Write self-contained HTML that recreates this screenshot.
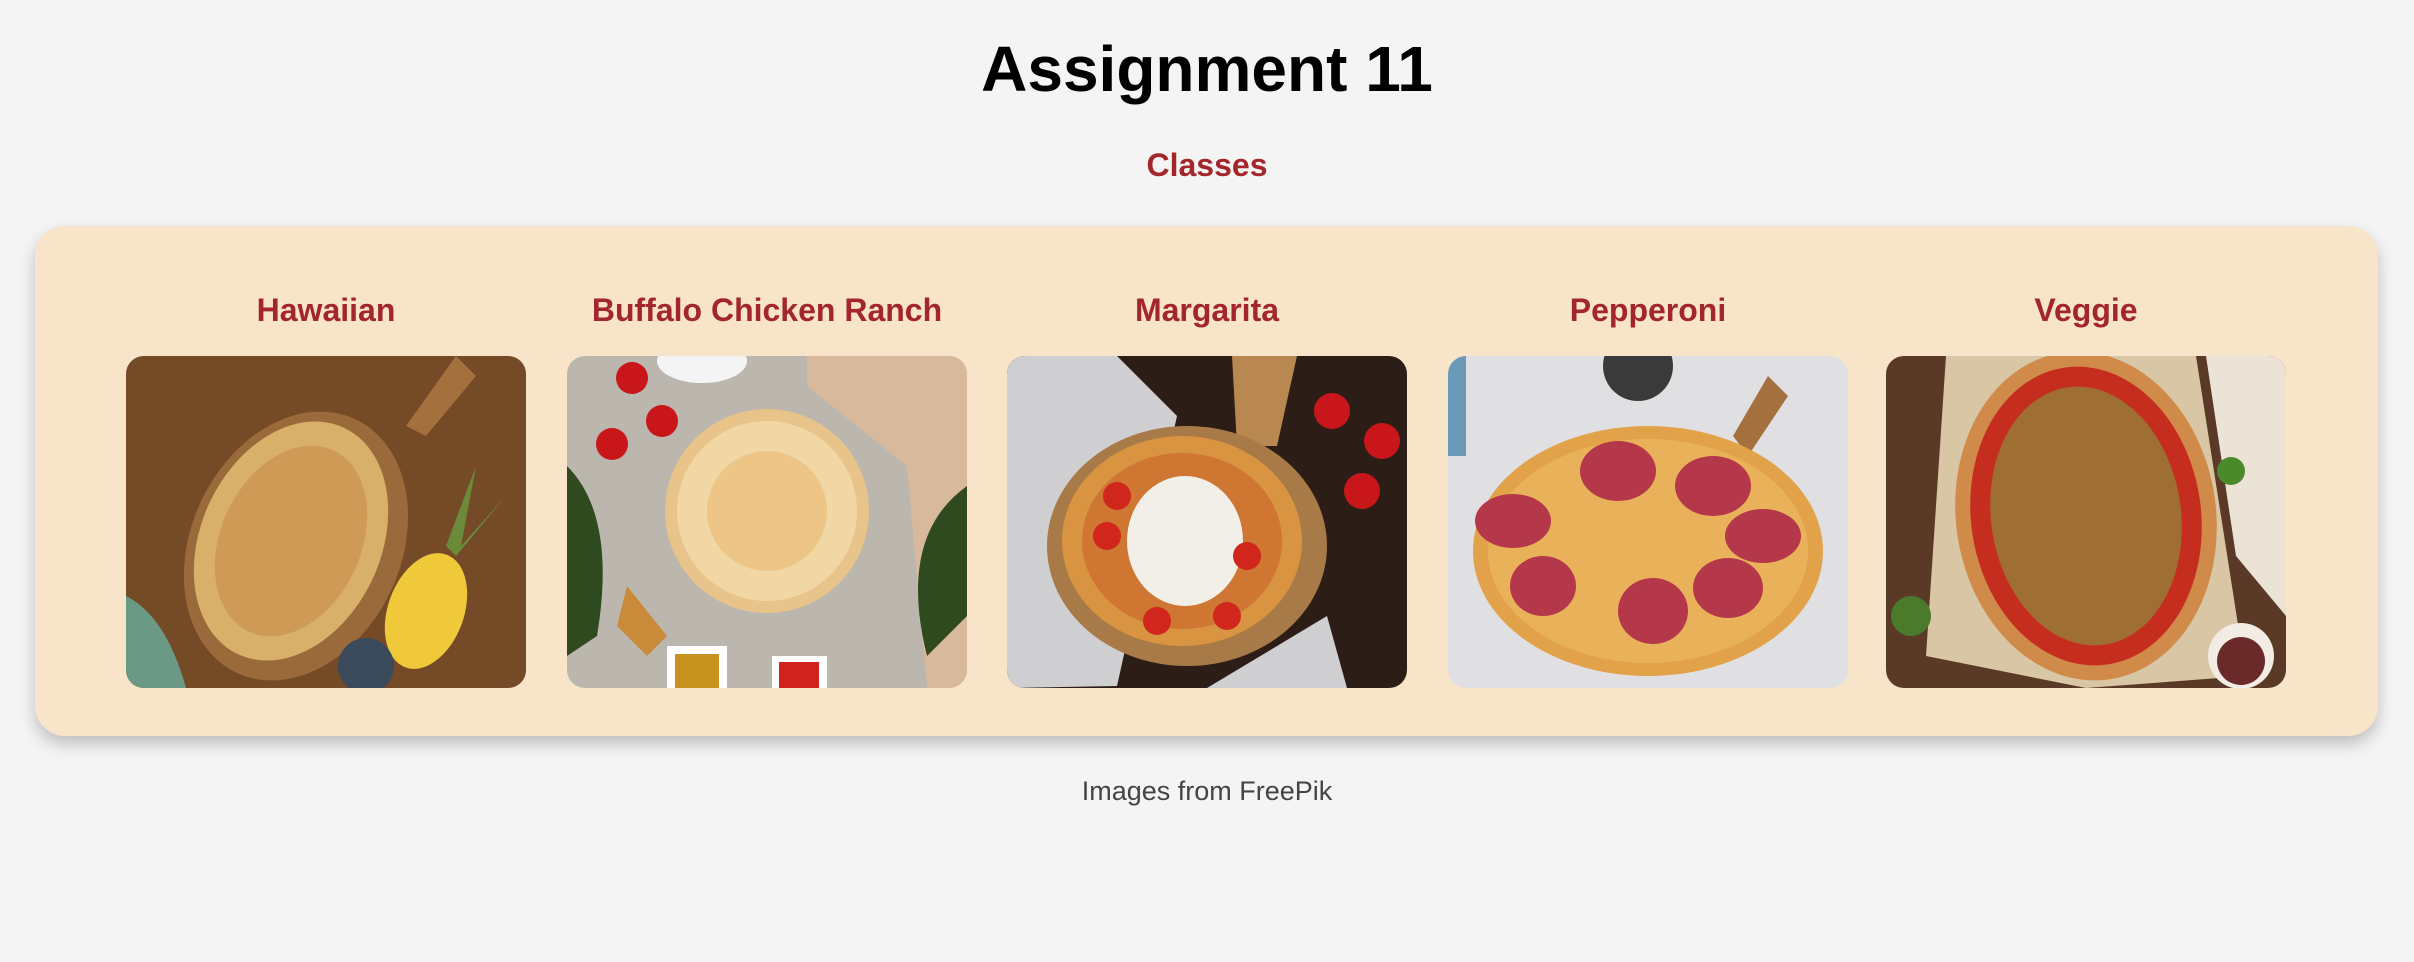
<!DOCTYPE html>
<html><head><meta charset="utf-8"><style>
html,body{margin:0;padding:0;background:#f4f4f4;width:2414px;height:962px;overflow:hidden;font-family:"Liberation Sans",Arial,sans-serif}
h1{position:absolute;top:26px;left:0;width:2414px;text-align:center;margin:0;font-size:64px;line-height:86px;color:#000;font-weight:bold}
.cls{position:absolute;top:145px;left:0;width:2414px;text-align:center;margin:0;font-size:32px;line-height:40px;color:#a3262a;font-weight:bold}
.card{position:absolute;left:35px;top:226px;width:2343px;height:510px;background:#f8e4c8;border-radius:30px;box-shadow:0 8px 16px rgba(0,0,0,.22)}
.item{position:absolute;top:0;width:400px;text-align:center}
.item h3{margin:0;position:absolute;top:64px;left:0;width:400px;font-size:32px;line-height:40px;color:#a3262a;font-weight:bold}
.item svg{position:absolute;top:130px;left:0;width:400px;height:332px;border-radius:18px}
.foot{position:absolute;top:776px;left:0;width:2414px;text-align:center;font-size:27px;color:#444}
</style></head><body>
<h1>Assignment 11</h1>
<div class="cls">Classes</div>
<div class="card">
<div class="item" style="left:91px"><h3>Hawaiian</h3>
<svg viewBox="0 0 400 332"><rect width="400" height="332" fill="#6e4524"/><rect x="0" y="0" width="400" height="332" fill="#7b4f2a" opacity=".5"/><path d="M0 240 Q40 260 60 332 L0 332Z" fill="#6a9a86"/><path d="M330 0 L350 20 L300 80 L280 70Z" fill="#a4713e"/><ellipse cx="170" cy="190" rx="105" ry="140" transform="rotate(25 170 190)" fill="#9a6a3a"/><ellipse cx="165" cy="185" rx="90" ry="125" transform="rotate(25 165 185)" fill="#d8b06a"/><ellipse cx="165" cy="185" rx="70" ry="100" transform="rotate(25 165 185)" fill="#c98a4a" opacity=".6"/><ellipse cx="300" cy="255" rx="38" ry="60" transform="rotate(20 300 255)" fill="#f0c93a"/><path d="M320 190 L350 110 L335 190 L380 140 L330 200Z" fill="#6b8a3a"/><circle cx="240" cy="310" r="28" fill="#3b4a5a"/></svg></div>
<div class="item" style="left:532px"><h3>Buffalo Chicken Ranch</h3>
<svg viewBox="0 0 400 332"><rect width="400" height="332" fill="#bcb7ae"/><path d="M240 0 L400 0 L400 332 L360 332 L340 110 L240 30Z" fill="#d9b99b"/><ellipse cx="135" cy="5" rx="45" ry="22" fill="#f4f4f4"/><path d="M0 110 Q50 160 30 280 L0 300Z" fill="#2f4a1e"/><path d="M400 130 Q330 180 360 300 L400 260Z" fill="#2f4a1e"/><circle cx="65" cy="22" r="16" fill="#c8161a"/><circle cx="95" cy="65" r="16" fill="#c8161a"/><circle cx="45" cy="88" r="16" fill="#c8161a"/><path d="M60 230 L100 280 L80 300 L50 270Z" fill="#c98a3a"/><circle cx="200" cy="155" r="102" fill="#e8c38a"/><circle cx="200" cy="155" r="90" fill="#f1d7a4"/><circle cx="200" cy="155" r="60" fill="#e9b46a" opacity=".5"/><rect x="100" y="290" width="60" height="42" fill="#fff"/><rect x="108" y="298" width="44" height="34" fill="#c8921e"/><rect x="205" y="300" width="55" height="32" fill="#fff"/><rect x="212" y="306" width="40" height="26" fill="#d0221e"/></svg></div>
<div class="item" style="left:972px"><h3>Margarita</h3>
<svg viewBox="0 0 400 332"><rect width="400" height="332" fill="#2c1d16"/><path d="M0 0 L110 0 L170 60 L110 330 L0 332Z" fill="#cfcfd2"/><path d="M200 332 L340 332 L320 260Z" fill="#cfcfd2"/><path d="M225 0 L290 0 L270 90 L230 90Z" fill="#b98750"/><circle cx="325" cy="55" r="18" fill="#c8161a"/><circle cx="375" cy="85" r="18" fill="#c8161a"/><circle cx="355" cy="135" r="18" fill="#c8161a"/><ellipse cx="180" cy="190" rx="140" ry="120" fill="#a87a48"/><ellipse cx="175" cy="185" rx="120" ry="105" fill="#d89440"/><ellipse cx="175" cy="185" rx="100" ry="88" fill="#c8622a" opacity=".6"/><ellipse cx="178" cy="185" rx="58" ry="65" fill="#f2efe8"/><circle cx="110" cy="140" r="14" fill="#d0261c"/><circle cx="100" cy="180" r="14" fill="#d0261c"/><circle cx="240" cy="200" r="14" fill="#d0261c"/><circle cx="220" cy="260" r="14" fill="#d0261c"/><circle cx="150" cy="265" r="14" fill="#d0261c"/></svg></div>
<div class="item" style="left:1413px"><h3>Pepperoni</h3>
<svg viewBox="0 0 400 332"><rect width="400" height="332" fill="#e0e0e3"/><rect x="0" y="0" width="18" height="100" fill="#6a9ab8"/><circle cx="190" cy="10" r="35" fill="#3a3a3a"/><path d="M320 20 L340 40 L300 100 L285 80Z" fill="#a4713e"/><ellipse cx="200" cy="195" rx="175" ry="125" fill="#e1a24a"/><ellipse cx="200" cy="195" rx="160" ry="112" fill="#e9b25a"/><g fill="#b5384a"><ellipse cx="170" cy="115" rx="38" ry="30"/><ellipse cx="265" cy="130" rx="38" ry="30"/><ellipse cx="65" cy="165" rx="38" ry="27"/><ellipse cx="315" cy="180" rx="38" ry="27"/><ellipse cx="95" cy="230" rx="33" ry="30"/><ellipse cx="280" cy="232" rx="35" ry="30"/><ellipse cx="205" cy="255" rx="35" ry="33"/></g></svg></div>
<div class="item" style="left:1851px"><h3>Veggie</h3>
<svg viewBox="0 0 400 332"><rect width="400" height="332" fill="#5a3a26"/><path d="M60 0 L310 0 L360 320 L200 332 L40 300Z" fill="#d9c6a4"/><path d="M320 0 L400 0 L400 260 L350 200Z" fill="#eae3d6"/><ellipse cx="200" cy="160" rx="130" ry="165" transform="rotate(-8 200 160)" fill="#d08a4a"/><ellipse cx="200" cy="160" rx="115" ry="150" transform="rotate(-8 200 160)" fill="#c52e1e"/><ellipse cx="200" cy="160" rx="95" ry="130" transform="rotate(-8 200 160)" fill="#8e8a3c" opacity=".7"/><circle cx="355" cy="300" r="33" fill="#f2ece4"/><circle cx="355" cy="305" r="24" fill="#6a2a2a"/><circle cx="25" cy="260" r="20" fill="#4a7a2a"/><circle cx="345" cy="115" r="14" fill="#4a8a2a"/></svg></div>
</div>
<div class="foot">Images from FreePik</div>
</body></html>
